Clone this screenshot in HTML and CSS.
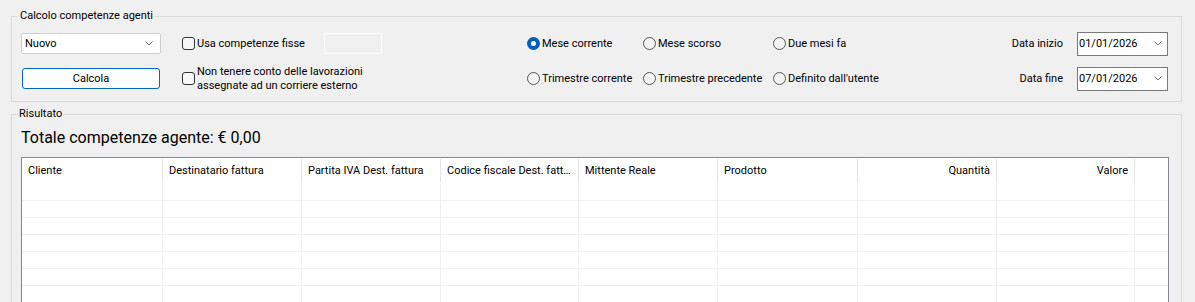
FILE: index.html
```html
<!DOCTYPE html>
<html lang="it">
<head>
    <meta charset="UTF-8">
    <meta name="viewport" content="width=device-width, initial-scale=1.0">
    <title>Calcolo competenze agenti</title>
    <link rel="stylesheet" href="styles.css">
</head>
<body>
    <div class="window">
        <fieldset class="group params-group">
            <legend>Calcolo competenze agenti</legend>
            <div class="params">
                <div class="combo">
                    <span>Nuovo</span>
                    <svg class="chevron" width="8" height="5" viewBox="0 0 8 5"><polyline points="0.5,0.5 4,4 7.5,0.5" fill="none" stroke="#707070" stroke-width="1"/></svg>
                </div>
                <div class="fixed-row">
                    <label class="check fixed-check"><input type="checkbox">Usa competenze fisse</label>
                    <span class="textbox"></span>
                </div>
                <label class="radio"><input type="radio" name="period" checked>Mese corrente</label>
                <label class="radio"><input type="radio" name="period">Mese scorso</label>
                <label class="radio"><input type="radio" name="period">Due mesi fa</label>
                <span class="date-label">Data inizio</span>
                <div class="date">
                    <span>01/01/2026</span>
                    <svg class="chevron" width="8" height="5" viewBox="0 0 8 5"><polyline points="0.5,0.5 4,4 7.5,0.5" fill="none" stroke="#707070" stroke-width="1"/></svg>
                </div>

                <button type="button" class="btn">Calcola</button>
                <label class="check multi"><input type="checkbox"><span>Non tenere conto delle lavorazioni<br>assegnate ad un corriere esterno</span></label>
                <label class="radio"><input type="radio" name="period">Trimestre corrente</label>
                <label class="radio"><input type="radio" name="period">Trimestre precedente</label>
                <label class="radio"><input type="radio" name="period">Definito dall'utente</label>
                <span class="date-label">Data fine</span>
                <div class="date">
                    <span>07/01/2026</span>
                    <svg class="chevron" width="8" height="5" viewBox="0 0 8 5"><polyline points="0.5,0.5 4,4 7.5,0.5" fill="none" stroke="#707070" stroke-width="1"/></svg>
                </div>
            </div>
        </fieldset>

        <fieldset class="group result-group">
            <legend>Risultato</legend>
            <div class="total">Totale competenze agente: € 0,00</div>
            <div class="grid">
                <div class="grid-row head">
                    <div class="cell">Cliente</div>
                    <div class="cell">Destinatario fattura</div>
                    <div class="cell">Partita IVA Dest. fattura</div>
                    <div class="cell">Codice fiscale Dest. fatt…</div>
                    <div class="cell">Mittente Reale</div>
                    <div class="cell">Prodotto</div>
                    <div class="cell num">Quantità</div>
                    <div class="cell num">Valore</div>
                    <div class="cell filler"></div>
                </div>
                <div class="grid-row"><div class="cell"></div><div class="cell"></div><div class="cell"></div><div class="cell"></div><div class="cell"></div><div class="cell"></div><div class="cell"></div><div class="cell"></div><div class="cell filler"></div></div>
                <div class="grid-row"><div class="cell"></div><div class="cell"></div><div class="cell"></div><div class="cell"></div><div class="cell"></div><div class="cell"></div><div class="cell"></div><div class="cell"></div><div class="cell filler"></div></div>
                <div class="grid-row"><div class="cell"></div><div class="cell"></div><div class="cell"></div><div class="cell"></div><div class="cell"></div><div class="cell"></div><div class="cell"></div><div class="cell"></div><div class="cell filler"></div></div>
                <div class="grid-row"><div class="cell"></div><div class="cell"></div><div class="cell"></div><div class="cell"></div><div class="cell"></div><div class="cell"></div><div class="cell"></div><div class="cell"></div><div class="cell filler"></div></div>
                <div class="grid-row"><div class="cell"></div><div class="cell"></div><div class="cell"></div><div class="cell"></div><div class="cell"></div><div class="cell"></div><div class="cell"></div><div class="cell"></div><div class="cell filler"></div></div>
                <div class="grid-row"><div class="cell"></div><div class="cell"></div><div class="cell"></div><div class="cell"></div><div class="cell"></div><div class="cell"></div><div class="cell"></div><div class="cell"></div><div class="cell filler"></div></div>
                <div class="grid-row"><div class="cell"></div><div class="cell"></div><div class="cell"></div><div class="cell"></div><div class="cell"></div><div class="cell"></div><div class="cell"></div><div class="cell"></div><div class="cell filler"></div></div>
            </div>
        </fieldset>
    </div>
</body>
</html>
```

FILE: styles.css
```css
* {
    box-sizing: border-box;
}
body {
    margin: 0;
    background-color: #f0f0f0;
    font-family: Roboto, "Liberation Sans", sans-serif;
    font-size: 11px;
    color: #000;
    overflow: hidden;
}
.window {
    padding: 8px 13px 0 11px;
}
.group {
    margin: 0;
    min-width: 0;
    border: 1px solid #dcdcdc;
}
.group legend {
    padding: 0 1px;
    margin-left: -2px;
    line-height: 16px;
}
.params-group {
    padding: 7px 13px 10px 9px;
}
.result-group {
    margin-top: 4px;
    padding: 5px 12px 0 9px;
}
.result-group legend {
    margin-left: -3px;
}

/* parametri */
.params {
    display: grid;
    grid-template-columns: 161px 345px 116px 130px 1fr auto 91px;
    grid-template-rows: 25px 25px;
    row-gap: 10px;
    align-items: center;
}
.combo {
    width: 140px;
    height: 21px;
    background: #fff;
    border: 1px solid #cfcfcf;
    border-radius: 2px;
    display: flex;
    align-items: center;
    justify-content: space-between;
    padding: 0 7px 0 3px;
}
.fixed-row {
    display: flex;
    align-items: center;
}
.fixed-check {
    width: 142px;
}
.textbox {
    width: 58px;
    height: 21px;
    border: 1px solid #fbfbfb;
    background: #f0f0f0;
}
.check, .radio {
    display: flex;
    align-items: center;
    gap: 2px;
    white-space: nowrap;
}
.check input {
    appearance: none;
    margin: 0;
    width: 13px;
    height: 13px;
    border: 1px solid #333;
    border-radius: 3px;
    background: #f7f7f7;
    flex: none;
}
.multi span {
    line-height: 14px;
}
.radio input {
    appearance: none;
    margin: 0;
    width: 13px;
    height: 13px;
    border: 1px solid #555;
    border-radius: 50%;
    background: #f3f3f3;
    flex: none;
}
.radio input:checked {
    border: 4px solid #005fb8;
    background: #fff;
}
.date-label {
    text-align: right;
    padding-right: 14px;
}
.date {
    height: 24px;
    background: #fff;
    border: 1px solid #7a7a7a;
    display: flex;
    align-items: center;
    justify-content: space-between;
    padding: 0 5px 0 1px;
}
.btn {
    width: 138px;
    height: 21px;
    margin-left: 1px;
    padding: 0;
    font: inherit;
    color: #000;
    background: #fdfdfd;
    border: 1px solid #0067c0;
    border-radius: 3px;
}

/* risultato */
.total {
    font-size: 16px;
    line-height: 22px;
    margin-bottom: 8px;
}
.grid {
    border: 1px solid #828790;
    background: #fff;
}
.grid-row {
    display: grid;
    grid-template-columns: 141px 139px 139px 138px 139px 140px 139px 138px 1fr;
    height: 17px;
    border-bottom: 1px solid #f0f0f0;
}
.grid-row .cell {
    border-right: 1px solid #f0f0f0;
}
.grid-row .filler {
    border-right: none;
}
.grid-row.head {
    height: 26px;
    border-bottom: none;
}
.head .cell {
    margin: 1px 0;
    border-right-color: #e5e5e5;
    padding: 0 6px;
    line-height: 24px;
    white-space: nowrap;
    overflow: hidden;
}
.head .num {
    text-align: right;
}
```
